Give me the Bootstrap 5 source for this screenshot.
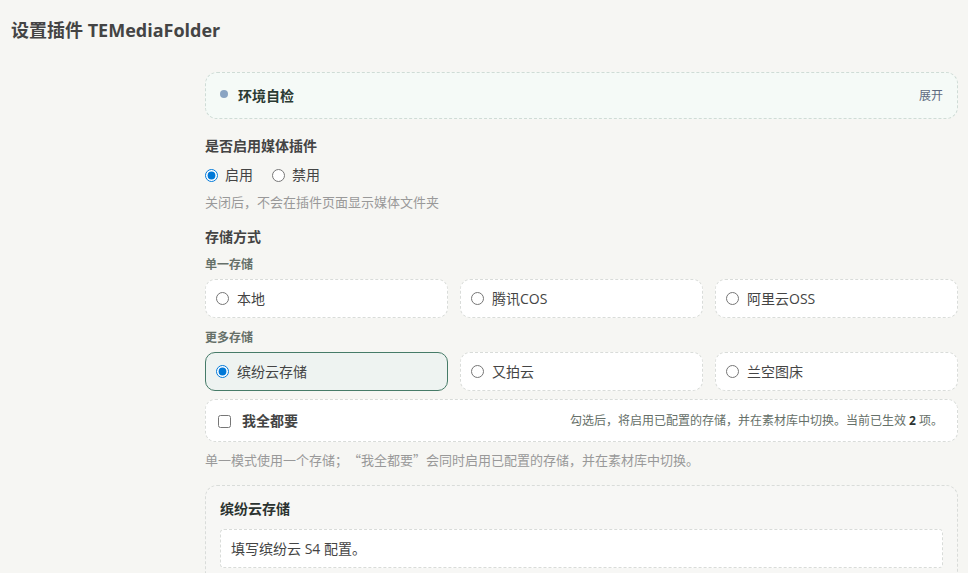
<!DOCTYPE html>
<html lang="zh-CN">
<head>
<meta charset="utf-8">
<meta name="viewport" content="width=device-width, initial-scale=1">
<title>设置插件 TEMediaFolder</title>
<link href="https://cdn.jsdelivr.net/npm/bootstrap@5.3.0/dist/css/bootstrap.min.css" rel="stylesheet">
<style>
  body { background: #f6f6f3; color: #444; font: 14px/20px "Open Sans", "Noto Sans CJK SC", sans-serif; text-spacing-trim: space-all; }
  .page-title { font-size: 18px; line-height: 24px; padding: 18px 11px 0; margin-bottom: 30px; }
  .settings { margin-left: 195px; padding: 0 10px 24px; }
  .dashed { border: 1px dashed #d9dcd9; border-radius: 12px; }
  .env-panel { background: #f5faf7; border-color: #cfdcd6; padding: 12px 14px; line-height: 21px; color: #2b3a33; }
  .status-dot { width: 8px; height: 8px; margin-right: 10px; border-radius: 50%; background: #8aa4c2; vertical-align: 3px; }
  .toggle-btn { font-size: 12px; color: #5f6b80; line-height: 21px; }
  .group-title { font-size: 14px; line-height: 20px; margin: 0 0 9px; }
  .enable-group .group-title { padding-top: 17px; }
  .storage-group .group-title { padding-top: 15px; margin-bottom: 10px; }
  .radio-line { gap: 19px; }
  .radio-line label { gap: 7px; }
  .sub-title { font-size: 12px; line-height: 16px; font-weight: 700; color: #667069; margin: 0 0 6px; }
  .hint { font-family: "Noto Sans CJK SC", sans-serif; font-size: 13px; color: #999; margin: 0; }
  .enable-group .hint { padding-top: 7px; }
  input[type=radio], input[type=checkbox] { width: 13px; height: 13px; margin: 0; flex: none; accent-color: #0078d7; }
  .option-row { --bs-gutter-x: 12px; }
  .option { background: #fff; border-radius: 10px; padding: 9px 10px; line-height: 19px; }
  .option:has(:checked) { background: #eef3f1; border: 1px solid #467b68; }
  .all-row { background: #fff; padding: 11px 14px 10px 12px; margin: 8px 0; border-radius: 10px; }
  .all-row label { gap: 11px; }
  .all-note { font-size: 12px; color: #667069; }
  .all-note strong, .detail-title { color: #2b3330; }
  .detail { background: #f7f7f5; margin-top: 15px; padding: 13px 14px 16px; }
  .detail-title { font-size: 14px; line-height: 20px; margin: 0 0 10px; }
  .detail-note { background: #fff; border-radius: 4px; padding: 9px 10px; line-height: 19px; }
</style>
<script src="https://cdn.jsdelivr.net/npm/bootstrap@5.3.0/dist/js/bootstrap.bundle.min.js" defer></script>
</head>
<body>
<h1 class="page-title fw-bold">设置插件 TEMediaFolder</h1>
<main class="settings">
  <form>
    <section class="env-panel dashed d-flex justify-content-between align-items-center">
      <div><span class="status-dot d-inline-block"></span><strong>环境自检</strong></div>
      <button type="button" class="toggle-btn border-0 bg-transparent p-0">展开</button>
    </section>

    <fieldset class="enable-group">
      <legend class="group-title fw-bold">是否启用媒体插件</legend>
      <div class="radio-line d-flex">
        <label class="d-flex align-items-center"><input type="radio" name="enabled" checked>启用</label>
        <label class="d-flex align-items-center"><input type="radio" name="enabled">禁用</label>
      </div>
      <p class="hint">关闭后，不会在插件页面显示媒体文件夹</p>
    </fieldset>

    <fieldset class="storage-group">
      <legend class="group-title fw-bold">存储方式</legend>
      <p class="sub-title">单一存储</p>
      <div class="row option-row">
        <div class="col"><label class="option dashed d-flex align-items-center gap-2"><input type="radio" name="storage">本地</label></div>
        <div class="col"><label class="option dashed d-flex align-items-center gap-2"><input type="radio" name="storage">腾讯COS</label></div>
        <div class="col"><label class="option dashed d-flex align-items-center gap-2"><input type="radio" name="storage">阿里云OSS</label></div>
      </div>
      <p class="sub-title mt-2 pt-1">更多存储</p>
      <div class="row option-row">
        <div class="col"><label class="option dashed d-flex align-items-center gap-2"><input type="radio" name="storage" checked>缤纷云存储</label></div>
        <div class="col"><label class="option dashed d-flex align-items-center gap-2"><input type="radio" name="storage">又拍云</label></div>
        <div class="col"><label class="option dashed d-flex align-items-center gap-2"><input type="radio" name="storage">兰空图床</label></div>
      </div>
      <div class="all-row dashed d-flex justify-content-between align-items-center">
        <label class="d-flex align-items-center fw-bold"><input type="checkbox">我全都要</label>
        <span class="all-note">勾选后，将启用已配置的存储，并在素材库中切换。当前已生效 <strong>2</strong> 项。</span>
      </div>
      <p class="hint">单一模式使用一个存储；“我全都要”会同时启用已配置的存储，并在素材库中切换。</p>
    </fieldset>

    <section class="detail dashed">
      <h2 class="detail-title fw-bold">缤纷云存储</h2>
      <div class="detail-note dashed">填写缤纷云 S4 配置。</div>
    </section>
  </form>
</main>
</body>
</html>
